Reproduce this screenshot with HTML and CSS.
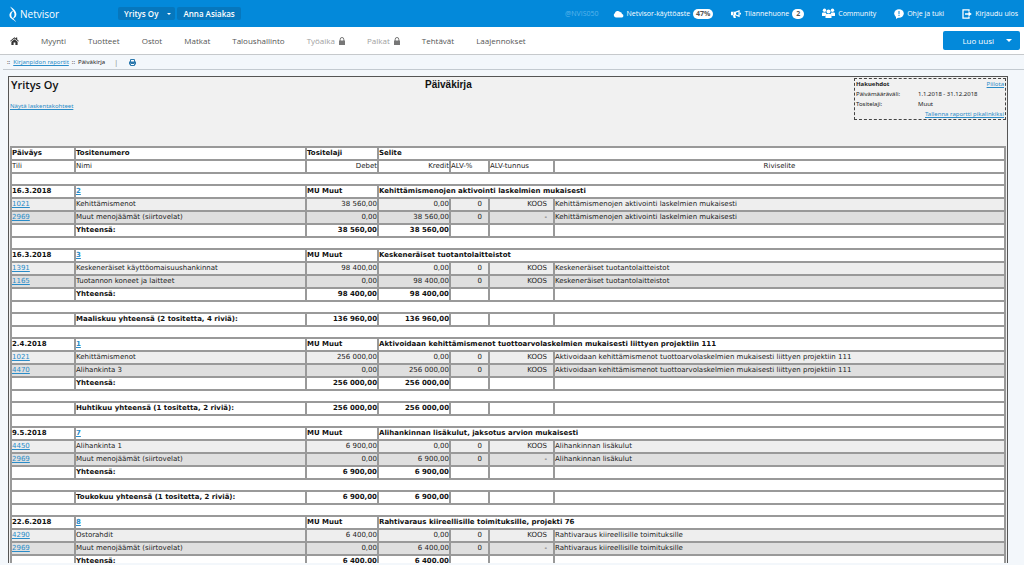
FILE: index.html
```html
<!DOCTYPE html>
<html lang="fi">
<head>
<meta charset="utf-8">
<title>Netvisor – Päiväkirja</title>
<link rel="stylesheet" href="styles.css">
</head>
<body>
<header class="topbar">
  <a class="brand" href="#">
    <svg class="brand-mark" viewBox="0 0 8 16"><path d="M1 .5C4 2 8 5.500 7.300 9C7 11 5.500 12.500 3 13C5.500 11 6.300 8.500 4.800 6C3.800 4.300 2.500 2.800 1 .5Z" fill="#fff"/><path d="M4.300 4.500C1.500 5.500 0 7.500 .5 10C1 12.500 4.500 13.500 7 16C6 13.500 2.500 12 2.300 9.500C2.200 7.500 3.200 6 4.300 4.500Z" fill="#fff"/></svg>
    <span>Netvisor</span>
  </a>
  <button class="chip chip-company" type="button">Yritys Oy <i class="caret"></i></button>
  <button class="chip chip-user" type="button">Anna Asiakas</button>
  <nav class="tools">
    <span class="env">@NVIS050</span>
    <a class="tool" href="#"><svg width="11" height="8" viewBox="0 0 11 8"><path d="M3 7.500A2.300 2.300 0 0 1 1.800 3.300A3 3 0 0 1 7 2A2.300 2.300 0 0 1 9 4A1.800 1.800 0 0 1 9 7.500Z" fill="#fff"/></svg>Netvisor-käyttöaste <b class="badge">47%</b></a>
    <a class="tool" href="#"><svg width="10" height="10" viewBox="0 0 11 10"><path d="M0 2.500H4.500L9.500 .5V8.500L4.500 6.500L5.500 9.500H3L2 6.500H0Z" fill="#fff"/><path d="M5.500 3.500L8.200 2.500V6.500L5.500 5.500ZM2.500 2.500H3V6.500H2.500Z" fill="#0389da"/><path d="M9.500 3.500H11V5.500H9.500Z" fill="#fff"/></svg>Tilannehuone <b class="badge badge-round">2</b></a>
    <a class="tool" href="#"><svg width="13" height="11" viewBox="0 0 13 11"><g fill="#fff"><circle cx="2.500" cy="2.200" r="1.700"/><circle cx="10.500" cy="2.200" r="1.700"/><circle cx="6.500" cy="3.500" r="2"/><path d="M0 8V5.500Q0 4.500 1 4.500H3.500L4.500 6L3 8ZM13 8V5.500Q13 4.500 12 4.500H9.500L8.500 6L10 8ZM3.500 10V7.500Q3.500 6 5 6H8Q9.500 6 9.500 7.500V10Z"/></g></svg>Community</a>
    <a class="tool" href="#"><svg width="10" height="10" viewBox="0 0 10 10"><ellipse cx="5" cy="4.500" rx="4.800" ry="4.200" fill="#fff"/><path d="M2 7V10L5 8Z" fill="#fff"/><path d="M4.500 2H5.500V5.200H4.500ZM4.500 6H5.500V7H4.500Z" fill="#0389da"/></svg>Ohje ja tuki</a>
    <a class="tool" href="#"><svg width="10" height="10" viewBox="0 0 10 10"><path d="M7 2.500V.8H1V9.200H7V7.500" fill="none" stroke="#fff" stroke-width="1.300"/><path d="M3 4.300H6.500V2.500L9.800 5L6.500 7.500V5.700H3Z" fill="#fff"/></svg>Kirjaudu ulos</a>
  </nav>
</header>

<nav class="menu">
  <a class="home" href="#" aria-label="Etusivu"><svg width="9" height="8" viewBox="0 0 9 8"><path d="M0 4L4.500 .2L6 1.400V.6H7.200V2.400L9 4L8.400 4.600L4.500 1.400L.6 4.600Z" fill="#333"/><path d="M1.400 4.700L4.500 2.200L7.600 4.700V8H5.400V5.500H3.600V8H1.400Z" fill="#333"/></svg></a>
  <a href="#">Myynti</a>
  <a href="#">Tuotteet</a>
  <a href="#">Ostot</a>
  <a href="#">Matkat</a>
  <a href="#">Taloushallinto</a>
  <a class="locked" href="#">Työaika <svg width="6" height="8" viewBox="0 0 6 8"><path d="M1.200 4V2.300A1.800 1.800 0 0 1 4.800 2.300V4" fill="none" stroke="#777"/><path d="M0 3.500H6V8H0Z" fill="#777"/></svg></a>
  <a class="locked" href="#">Palkat <svg width="6" height="8" viewBox="0 0 6 8"><path d="M1.200 4V2.300A1.800 1.800 0 0 1 4.800 2.300V4" fill="none" stroke="#777"/><path d="M0 3.500H6V8H0Z" fill="#777"/></svg></a>
  <a href="#">Tehtävät</a>
  <a href="#">Laajennokset</a>
  <button class="create" type="button"><span>Luo uusi</span><i class="caret"></i></button>
</nav>

<nav class="crumbs">
  <span>::</span><a href="#">Kirjanpidon raportit</a><span>::</span><span class="here">Päiväkirja</span><span class="bar">|</span>
  <button class="print" type="button" aria-label="Tulosta"><svg width="7" height="7" viewBox="0 0 7 7"><path d="M1.500 3V.5H5.500V3M1.500 4.500H5.500V6.500H1.500Z" fill="#fff" stroke="#2b78ad"/><path d="M0 2.500H7V5.500H6V4H1V5.500H0Z" fill="#2b78ad"/></svg></button>
</nav>

<main class="page">
  <section class="report">
    <div class="report-head">
      <div>
        <h2>Yritys Oy</h2>
        <a class="dims" href="#">Näytä laskentakohteet</a>
      </div>
      <h1>Päiväkirja</h1>
      <div class="criteria">
        <b>Hakuehdot</b><a class="end" href="#">Piilota</a>
        <span>Päivämääräväli:</span><span>1.1.2018 - 31.12.2018</span>
        <span>Tositelaji:</span><span>Muut</span>
        <a class="end wide" href="#">Tallenna raportti pikalinkiksi</a>
      </div>
    </div>
    <table class="journal">
      <colgroup><col class="c-date"><col class="c-name"><col class="c-sum"><col class="c-sum"><col class="c-vat"><col class="c-code"><col></colgroup>
      <thead>
        <tr class="strong"><th>Päiväys</th><th>Tositenumero</th><th>Tositelaji</th><th colspan="4">Selite</th></tr>
        <tr class="sub"><th>Tili</th><th>Nimi</th><th class="num">Debet</th><th class="num">Kredit</th><th>ALV-%</th><th>ALV-tunnus</th><th class="mid">Riviselite</th></tr>
      </thead>
      <tbody>
        <tr class="gap"><td colspan="7"></td></tr>
        <tr class="strong"><td>16.3.2018</td><td><a href="#">2</a></td><td>MU Muut</td><td colspan="4">Kehittämismenojen aktivointi laskelmien mukaisesti</td></tr>
        <tr class="odd"><td><a href="#">1021</a></td><td>Kehittämismenot</td><td class="num">38 560,00</td><td class="num">0,00</td><td class="code">0</td><td class="code">KOOS</td><td>Kehittämismenojen aktivointi laskelmien mukaisesti</td></tr>
        <tr class="even"><td><a href="#">2969</a></td><td>Muut menojäämät (siirtovelat)</td><td class="num">0,00</td><td class="num">38 560,00</td><td class="code">0</td><td class="code">-</td><td>Kehittämismenojen aktivointi laskelmien mukaisesti</td></tr>
        <tr class="strong"><td></td><td>Yhteensä:</td><td class="num">38 560,00</td><td class="num">38 560,00</td><td></td><td></td><td></td></tr>
      </tbody>
      <tbody>
        <tr class="gap"><td colspan="7"></td></tr>
        <tr class="strong"><td>16.3.2018</td><td><a href="#">3</a></td><td>MU Muut</td><td colspan="4">Keskeneräiset tuotantolaitteistot</td></tr>
        <tr class="odd"><td><a href="#">1391</a></td><td>Keskeneräiset käyttöomaisuushankinnat</td><td class="num">98 400,00</td><td class="num">0,00</td><td class="code">0</td><td class="code">KOOS</td><td>Keskeneräiset tuotantolaitteistot</td></tr>
        <tr class="even"><td><a href="#">1165</a></td><td>Tuotannon koneet ja laitteet</td><td class="num">0,00</td><td class="num">98 400,00</td><td class="code">0</td><td class="code">KOOS</td><td>Keskeneräiset tuotantolaitteistot</td></tr>
        <tr class="strong"><td></td><td>Yhteensä:</td><td class="num">98 400,00</td><td class="num">98 400,00</td><td></td><td></td><td></td></tr>
        <tr class="gap"><td colspan="7"></td></tr>
        <tr class="strong"><td></td><td>Maaliskuu yhteensä (2 tositetta, 4 riviä):</td><td class="num">136 960,00</td><td class="num">136 960,00</td><td></td><td></td><td></td></tr>
      </tbody>
      <tbody>
        <tr class="gap"><td colspan="7"></td></tr>
        <tr class="strong"><td>2.4.2018</td><td><a href="#">1</a></td><td>MU Muut</td><td colspan="4">Aktivoidaan kehittämismenot tuottoarvolaskelmien mukaisesti liittyen projektiin 111</td></tr>
        <tr class="odd"><td><a href="#">1021</a></td><td>Kehittämismenot</td><td class="num">256 000,00</td><td class="num">0,00</td><td class="code">0</td><td class="code">KOOS</td><td>Aktivoidaan kehittämismenot tuottoarvolaskelmien mukaisesti liittyen projektiin 111</td></tr>
        <tr class="even"><td><a href="#">4470</a></td><td>Alihankinta 3</td><td class="num">0,00</td><td class="num">256 000,00</td><td class="code">0</td><td class="code">KOOS</td><td>Aktivoidaan kehittämismenot tuottoarvolaskelmien mukaisesti liittyen projektiin 111</td></tr>
        <tr class="strong"><td></td><td>Yhteensä:</td><td class="num">256 000,00</td><td class="num">256 000,00</td><td></td><td></td><td></td></tr>
        <tr class="gap"><td colspan="7"></td></tr>
        <tr class="strong"><td></td><td>Huhtikuu yhteensä (1 tositetta, 2 riviä):</td><td class="num">256 000,00</td><td class="num">256 000,00</td><td></td><td></td><td></td></tr>
      </tbody>
      <tbody>
        <tr class="gap"><td colspan="7"></td></tr>
        <tr class="strong"><td>9.5.2018</td><td><a href="#">7</a></td><td>MU Muut</td><td colspan="4">Alihankinnan lisäkulut, jaksotus arvion mukaisesti</td></tr>
        <tr class="odd"><td><a href="#">4450</a></td><td>Alihankinta 1</td><td class="num">6 900,00</td><td class="num">0,00</td><td class="code">0</td><td class="code">KOOS</td><td>Alihankinnan lisäkulut</td></tr>
        <tr class="even"><td><a href="#">2969</a></td><td>Muut menojäämät (siirtovelat)</td><td class="num">0,00</td><td class="num">6 900,00</td><td class="code">0</td><td class="code">-</td><td>Alihankinnan lisäkulut</td></tr>
        <tr class="strong"><td></td><td>Yhteensä:</td><td class="num">6 900,00</td><td class="num">6 900,00</td><td></td><td></td><td></td></tr>
        <tr class="gap"><td colspan="7"></td></tr>
        <tr class="strong"><td></td><td>Toukokuu yhteensä (1 tositetta, 2 riviä):</td><td class="num">6 900,00</td><td class="num">6 900,00</td><td></td><td></td><td></td></tr>
      </tbody>
      <tbody>
        <tr class="gap"><td colspan="7"></td></tr>
        <tr class="strong"><td>22.6.2018</td><td><a href="#">8</a></td><td>MU Muut</td><td colspan="4">Rahtivaraus kiireellisille toimituksille, projekti 76</td></tr>
        <tr class="odd"><td><a href="#">4290</a></td><td>Ostorahdit</td><td class="num">6 400,00</td><td class="num">0,00</td><td class="code">0</td><td class="code">KOOS</td><td>Rahtivaraus kiireellisille toimituksille</td></tr>
        <tr class="even"><td><a href="#">2969</a></td><td>Muut menojäämät (siirtovelat)</td><td class="num">0,00</td><td class="num">6 400,00</td><td class="code">0</td><td class="code">-</td><td>Rahtivaraus kiireellisille toimituksille</td></tr>
        <tr class="strong"><td></td><td>Yhteensä:</td><td class="num">6 400,00</td><td class="num">6 400,00</td><td></td><td></td><td></td></tr>
      </tbody>
    </table>
  </section>
</main>
</body>
</html>
```
FILE: styles.css
```css
* { box-sizing: border-box; }
body {
  margin: 0;
  height: 100vh;
  display: flex;
  flex-direction: column;
  overflow: hidden;
  background: #f3f7fb;
  font-family: "Open Sans", "Noto Sans", sans-serif;
  font-size: 8px;
  color: #222;
}
button { border: 0; padding: 0; font: inherit; color: inherit; background: none; }
svg { flex: none; }
.caret {
  border: 3px solid transparent;
  border-top-color: #fff;
  border-bottom: 0;
}

.topbar {
  flex: none;
  display: flex;
  align-items: center;
  height: 27px;
  padding: 0 6px 0 9px;
  background: #0389da;
  color: #fff;
}
.topbar a { color: #fff; text-decoration: none; }
.brand { display: flex; align-items: center; gap: 3px; width: 109px; font-size: 10px; }
.brand-mark { width: 8px; height: 16px; }
.chip {
  display: flex;
  align-items: center;
  height: 13px;
  padding: 0 6px;
  margin-right: 2px;
  border-radius: 2px;
  background: #0677bd;
  font-weight: 600;
  white-space: nowrap;
}
.chip-company { padding-right: 4px; }
.chip .caret { margin-left: 9px; border-width: 2px; border-bottom: 0; }
.tools { display: flex; align-items: center; gap: 18px; margin-left: auto; font-size: 7px; white-space: nowrap; }
.tool { display: flex; align-items: center; gap: 3px; }
.env { margin-right: -4px; color: #5ab5ea; }
.badge {
  padding: 0 3px;
  border-radius: 5px;
  background: #fff;
  color: #555;
  line-height: 10px;
}
.badge-round { padding: 0 4px; }

.menu {
  flex: none;
  display: flex;
  align-items: center;
  gap: 22px;
  height: 28px;
  padding: 0 4px 0 10px;
  border-bottom: 1px solid #c6c9cc;
  background: #fff;
}
.menu a { display: flex; align-items: center; gap: 4px; color: #555; text-decoration: none; }
.menu .locked { color: #a0a0a0; }
.create {
  display: flex;
  align-items: center;
  gap: 12px;
  height: 19px;
  margin-left: auto;
  padding: 0 8px 0 19px;
  border-radius: 2px;
  background: #0389da;
  color: #fff;
}

.crumbs {
  flex: none;
  display: flex;
  align-items: center;
  gap: 3px;
  height: 15px;
  margin-left: 3px;
  padding-left: 4px;
  border-bottom: 1px solid #c3cad0;
  font: 6px "Noto Sans", sans-serif;
}
.crumbs a, .report a { color: #2a8cc8; }
.bar { margin: 0 8px 0 6px; color: #888; font-size: 7px; }
.print { display: flex; }

.page {
  flex: 1;
  min-height: 0;
  overflow: hidden;
  margin-bottom: 2px;
  padding: 6px 16px 0 8px;
}
.report {
  padding: 1px 1px 0;
  border: 1px solid #555;
  background: #f1f1f1;
  font: 7px/11px "DejaVu Sans", sans-serif;
}
.report-head {
  display: grid;
  grid-template-columns: 5fr 2fr 5fr;
  height: 68px;
}
h1, h2 { margin: 0; font-size: 10px; line-height: 13px; color: #111; }
h1 { font-family: "Liberation Sans", sans-serif; }
h2 { padding-left: 1px; font-family: "Open Sans", sans-serif; font-size: 11px; font-weight: 600; }
.dims { display: block; margin-top: 10px; font: 6px/11px "Noto Sans", sans-serif; }
.criteria {
  display: grid;
  grid-template-columns: 62px 1fr;
  align-self: start;
  justify-self: end;
  width: 152px;
  padding: 0 1px;
  border: 1px dashed #444;
  font: 6px/10px "Noto Sans", sans-serif;
}
.end { text-align: right; }
.wide { grid-column: 1 / -1; }

.journal {
  width: 100%;
  table-layout: fixed;
  border-collapse: collapse;
  background: #fff;
}
.c-date { width: 64px; }
.c-name { width: 231px; }
.c-sum { width: 72px; }
.c-vat { width: 39px; }
.c-code { width: 65px; }
.journal th, .journal td {
  height: 13px;
  padding: 0;
  border: 2px solid #999;
  text-align: left;
  font-weight: 400;
  white-space: nowrap;
}
.journal .strong > * { font-weight: 700; color: #111; }
.journal .gap td { height: 12px; }
.journal .num { text-align: right; }
.journal .code { padding-right: 6px; text-align: right; }
.journal .mid { text-align: center; }
.odd { background: #eee; }
.even { background: #dfdfdf; }
```
